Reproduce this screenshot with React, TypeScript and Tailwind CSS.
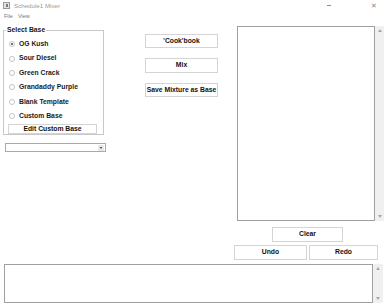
import React from "react";

const font = { fontFamily: '"Liberation Sans", Arial, sans-serif' };

function Btn({ label, className }: { label: string; className: string }) {
  return (
    <div
      className={`flex items-center justify-center border border-[#d4d4d4] bg-white text-[6.8px] font-bold text-[#111] ${className}`}
    >
      {label}
    </div>
  );
}

function Radio({ label, checked }: { label: string; checked?: boolean }) {
  return (
    <div className="flex h-[14.4px] items-center pl-[5px]">
      <div className="relative h-[6px] w-[6px] rounded-full border border-[#c4c4c4] bg-white">
        {checked && <div className="absolute left-[1px] top-[1px] h-[2px] w-[2px] rounded-full bg-[#444]" />}
      </div>
      <span className="ml-[4px] text-[6.8px] font-bold text-[#1a1a1a]">{label}</span>
    </div>
  );
}

function VScroll({ className }: { className: string }) {
  return (
    <div className={`flex flex-col items-center justify-between bg-[#f0f0f0] py-[3px] ${className}`}>
      <div className="h-0 w-0 border-x-[2px] border-b-[3px] border-x-transparent border-b-[#a8a8a8]" />
      <div className="h-0 w-0 border-x-[2px] border-t-[3px] border-x-transparent border-t-[#a8a8a8]" />
    </div>
  );
}

export default function App() {
  return (
    <div className="relative h-[305px] w-[385px] overflow-hidden bg-white" style={font}>
      {/* Title bar */}
      <div className="flex h-[11px] items-center">
        <div className="ml-[3px] flex h-[7px] w-[7px] items-center justify-center border border-[#9a9a9a] bg-[#e4e4e4]">
          <div className="h-[3px] w-[2px] bg-[#777]" />
        </div>
        <span className="ml-[4px] text-[6.2px] text-[#9a9a9a]">Schedule1 Mixer</span>
        <div className="flex-1" />
        <div className="mr-[40px] h-px w-[4px] bg-[#8a8a8a]" />
        <span className="mr-[8px] text-[7px] leading-none text-[#8a8a8a]">✕</span>
      </div>
      {/* Menu bar */}
      <div className="flex h-[11px] items-center gap-[5px] pl-[4px] text-[5.5px] text-[#777]">
        <span>File</span>
        <span>View</span>
      </div>

      {/* Main */}
      <div className="flex h-[241px]">
        {/* Left column */}
        <div className="w-[108px] pl-[3px] pt-[5px]">
          <fieldset className="h-[108px] w-[101px] border border-[#c8c8c8] px-0 pt-0">
            <legend className="ml-[2px] px-[1px] text-[6.8px] font-bold leading-[6px] text-[#1a1a1a]">Select Base</legend>
            <div className="pt-[4px]">
              <Radio label="OG Kush" checked />
              <Radio label="Sour Diesel" />
              <Radio label="Green Crack" />
              <Radio label="Grandaddy Purple" />
              <Radio label="Blank Template" />
              <Radio label="Custom Base" />
            </div>
            <Btn label="Edit Custom Base" className="ml-[4px] mt-[1px] h-[10px] w-[89px]" />
          </fieldset>
          <div className="ml-[2px] mt-[8px] flex h-[9px] w-[101px] items-center justify-end border border-[#a9a9a9] bg-white pr-[1px]">
            <div className="flex h-[6px] w-[6px] items-center justify-center bg-[#e8e8e8]">
              <div className="h-0 w-0 border-x-[1.5px] border-t-[2px] border-x-transparent border-t-[#222]" />
            </div>
          </div>
        </div>

        {/* Middle column */}
        <div className="flex w-[128px] flex-col pl-[37px] pt-[12px]">
          <Btn label="'Cook'book" className="h-[14px] w-[73px]" />
          <Btn label="Mix" className="mt-[10px] h-[15px] w-[73px]" />
          <Btn label="Save Mixture as Base" className="mt-[10px] h-[14px] w-[73px]" />
        </div>

        {/* Right column */}
        <div className="flex flex-col pl-[1px] pt-[4px]">
          <div className="flex h-[195px]">
            <div className="w-[138px] border border-[#a0a0a0] bg-white" />
            <VScroll className="w-[9px]" />
          </div>
          <Btn label="Clear" className="ml-[35px] mt-[6px] h-[15px] w-[71px]" />
          <div className="mt-[3px] flex gap-[2px]">
            <Btn label="Undo" className="-ml-[3px] h-[15px] w-[73px]" />
            <Btn label="Redo" className="h-[15px] w-[69px]" />
          </div>
        </div>
      </div>

      {/* Bottom textbox */}
      <div className="flex pl-[4px] pt-[1px]">
        <div className="h-[39px] w-[369px] border border-[#a0a0a0] bg-white" />
        <VScroll className="h-[39px] w-[10px]" />
      </div>
    </div>
  );
}
